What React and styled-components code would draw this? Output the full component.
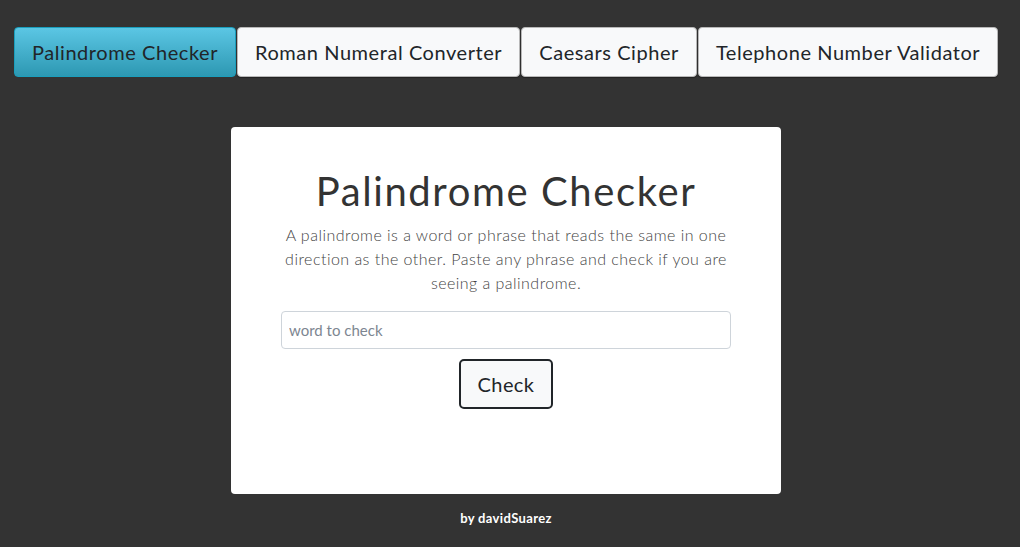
import React, { useState } from "react";
import styled, { createGlobalStyle } from "styled-components";

const GlobalStyle = createGlobalStyle`
  html, body {
    margin: 0;
    padding: 0;
    background: #333333;
  }
  body {
    font-family: Lato, "Open Sans", sans-serif;
    color: #212529;
  }
`;

const Page = styled.div`
  width: 1012px;
  min-height: 547px;
  display: flex;
  flex-direction: column;
  align-items: center;
`;

const Nav = styled.nav`
  align-self: stretch;
  display: flex;
  gap: 1px;
  padding: 27px 14px 0;
`;

const Tab = styled.button`
  flex-shrink: 0;
  white-space: nowrap;
  font-family: inherit;
  font-size: 20px;
  line-height: 30px;
  padding: 9px 17px;
  border-radius: 4px;
  cursor: pointer;
  color: #212529;
  border: 1px solid ${({ active }) => (active ? "#1a9fbd" : "#b8b8b8")};
  background: ${({ active }) =>
    active ? "linear-gradient(to bottom, #5bc6e4 0%, #2d98b2 100%)" : "#f8f9fa"};
  box-shadow: ${({ active }) => (active ? "none" : "0 1px 1px rgba(0,0,0,0.35)")};
  letter-spacing: 0.56px;
`;

const Card = styled.main`
  margin-top: 50px;
  width: 550px;
  height: 367px;
  box-sizing: border-box;
  background: #ffffff;
  border-radius: 4px;
  padding: 40px 50px 0;
  display: flex;
  flex-direction: column;
  align-items: center;
`;

const Title = styled.h1`
  margin: 0;
  font-size: 40px;
  line-height: 48px;
  font-weight: 400;
  color: #333333;
  letter-spacing: 1.6px;
`;

const Lead = styled.p`
  margin: 8px 0 0;
  font-size: 16px;
  line-height: 24px;
  color: #444444;
  text-align: center;
  font-weight: 300;
  letter-spacing: 0.47px;
`;

const Input = styled.input`
  margin-top: 16px;
  width: 450px;
  height: 38px;
  box-sizing: border-box;
  border: 1px solid #ced4da;
  border-radius: 4px;
  padding: 0 7px;
  font-family: inherit;
  font-size: 15px;
  color: #495057;
  &::placeholder {
    color: #7d8691;
  }
`;

const CheckButton = styled.button`
  margin-top: 10px;
  width: 94px;
  height: 50px;
  box-sizing: border-box;
  border: 2px solid #212529;
  border-radius: 5px;
  background: #f8f9fa;
  font-family: inherit;
  font-size: 20px;
  color: #212529;
  cursor: pointer;
  letter-spacing: 0.4px;
`;

const Footer = styled.footer`
  margin-top: 16px;
  font-size: 13px;
  font-weight: 700;
  color: #ffffff;
  letter-spacing: 0.35px;
`;

const tabs = [
  "Palindrome Checker",
  "Roman Numeral Converter",
  "Caesars Cipher",
  "Telephone Number Validator",
];

export default function App() {
  const [current, setCurrent] = useState(0);
  const [word, setWord] = useState("");

  return (
    <Page>
      <GlobalStyle />
      <Nav>
        {tabs.map((t, i) => (
          <Tab key={t} active={i === current} onClick={() => setCurrent(i)}>
            {t}
          </Tab>
        ))}
      </Nav>
      <Card>
        <Title>Palindrome Checker</Title>
        <Lead>
          A palindrome is a word or phrase that reads the same in one
          <br />
          direction as the other. Paste any phrase and check if you are
          <br />
          seeing a palindrome.
        </Lead>
        <Input
          placeholder="word to check"
          value={word}
          onChange={(e) => setWord(e.target.value)}
        />
        <CheckButton>Check</CheckButton>
      </Card>
      <Footer>by davidSuarez</Footer>
    </Page>
  );
}
